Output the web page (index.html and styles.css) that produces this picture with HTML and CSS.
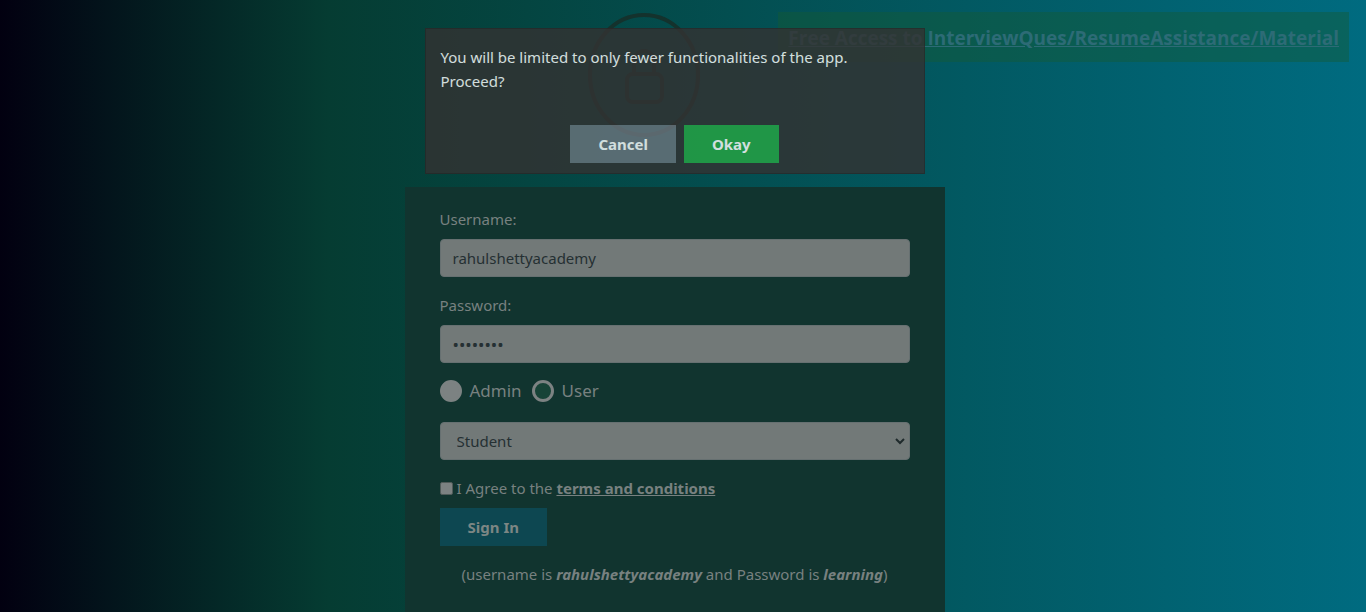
FILE: index.html
```html
<!DOCTYPE html>
<html lang="en">
<head>
<meta charset="utf-8">
<title>Login</title>
<link rel="stylesheet" href="styles.css">
</head>
<body>
<div class="page">
  <header class="top">
    <svg class="lock" viewBox="0 0 112 124" fill="none" aria-hidden="true">
      <ellipse cx="56" cy="62" rx="54" ry="60" stroke-width="4"/>
      <rect x="39" y="61" width="35" height="28" rx="6" stroke-width="4"/>
      <path d="M46 60v-12a10 10 0 0 1 20 0v12" stroke-width="4"/>
    </svg>
    <a class="banner" href="#">Free Access to InterviewQues/ResumeAssistance/Material</a>
  </header>
  <form class="card">
    <label class="label" for="username">Username:</label>
    <input class="field" id="username" type="text" value="rahulshettyacademy">
    <label class="label" for="password">Password:</label>
    <input class="field password" id="password" type="password" value="learning">
    <div class="roles">
      <label class="role"><input class="radio" type="radio" name="role" checked>Admin</label>
      <label class="role"><input class="radio" type="radio" name="role">User</label>
    </div>
    <div class="select-wrap">
      <select class="field select" aria-label="Occupation"><option>Student</option><option>Teacher</option><option>Consultant</option></select>
      <svg class="chevron" viewBox="0 0 10 8" fill="none" aria-hidden="true"><path d="M1 2l4 4 4-4" stroke-width="2"/></svg>
    </div>
    <div class="terms">
      <input class="check" id="terms" type="checkbox">
      <label for="terms">I Agree to the <a class="link" href="#">terms and conditions</a></label>
    </div>
    <button class="button signin" type="button">Sign In</button>
    <p class="hint">(username is <b><i>rahulshettyacademy</i></b> and Password is <b><i>learning</i></b>)</p>
  </form>
</div>
<div class="overlay">
  <div class="modal" role="dialog" aria-modal="true" aria-labelledby="message">
    <p class="message" id="message">You will be limited to only fewer functionalities of the app. Proceed?</p>
    <div class="actions">
      <button class="button cancel" type="button">Cancel</button>
      <button class="button okay" type="button">Okay</button>
    </div>
  </div>
</div>
</body>
</html>
```
FILE: styles.css
```css
* { box-sizing: border-box; }
body {
  margin: 0;
  overflow: hidden;
  font: 15px/24px "Noto Sans", sans-serif;
  color: #788180;
}
.page {
  display: flex;
  flex-direction: column;
  min-height: 100vh;
  padding: 12px 17px 0 0;
  background: linear-gradient(90deg, #020010 0%, #053c32 24%, #006b80 100%);
}
.top {
  display: flex;
  justify-content: flex-end;
  align-items: flex-start;
  gap: 78px;
  height: 175px;
}
.lock { width: 112px; height: 126px; stroke: #14322d; }
.banner {
  padding: 11px 10px 9px;
  background: rgba(20, 90, 50, .43);
  color: #2d6b76;
  font-family: "Open Sans", sans-serif;
  font-size: 19px;
  font-weight: 700;
  line-height: 30px;
  white-space: nowrap;
}
.card {
  flex: 1;
  display: flex;
  flex-direction: column;
  align-items: flex-start;
  align-self: center;
  width: 100%;
  max-width: 540px;
  padding: 20px 35px;
  background: #11342f;
}
.label { margin-bottom: 8px; }
.field {
  width: 100%;
  height: 38px;
  margin: 0 0 16px;
  padding: 0 12px;
  border: 1px solid #667071;
  border-radius: 4px;
  background: #727978;
  color: #253033;
  font: inherit;
}
.password { font-size: 17px; }
.roles { display: flex; gap: 10px; height: 24px; margin-bottom: 19px; }
.role { display: flex; align-items: center; gap: 8px; font-size: 17px; line-height: 28px; }
.radio {
  appearance: none;
  width: 22px;
  height: 22px;
  margin: 0;
  border: 3px solid #7c8282;
  border-radius: 50%;
  background: #174337;
}
.radio:checked { background: #7c8282; }
.select-wrap { position: relative; width: 100%; }
.select { display: block; appearance: none; padding: 0 16px; }
.chevron { position: absolute; right: 5px; top: 15px; width: 10px; height: 8px; stroke: #1f2a2c; }
.terms { display: flex; align-items: center; gap: 4px; margin-bottom: 8px; }
.check {
  appearance: none;
  width: 13px;
  height: 13px;
  margin: 0;
  border: 1px solid #505b59;
  border-radius: 2px;
  background: #7c8282;
}
.link { color: inherit; font-weight: 700; }
.button {
  height: 38px;
  padding: 0 28px;
  border: 0;
  font: inherit;
  font-weight: 700;
}
.signin { background: #0d4751; color: #7c8684; }
.hint { align-self: center; margin: 16px 0; }
.overlay {
  position: fixed;
  inset: 0;
  display: flex;
  justify-content: center;
  align-items: flex-start;
  padding: 28px 17px 28px 0;
}
.modal {
  width: 100%;
  max-width: 500px;
  padding: 16px 15px 10px;
  border: 1px solid #2d2828;
  background: #343333;
  color: #fff;
  opacity: .82;
}
.message { margin: 0 0 32px; max-width: 440px; }
.actions { display: flex; justify-content: center; gap: 8px; }
.cancel { background: #6c757d; color: #fff; }
.okay { background: #28a745; color: #fff; }
```
